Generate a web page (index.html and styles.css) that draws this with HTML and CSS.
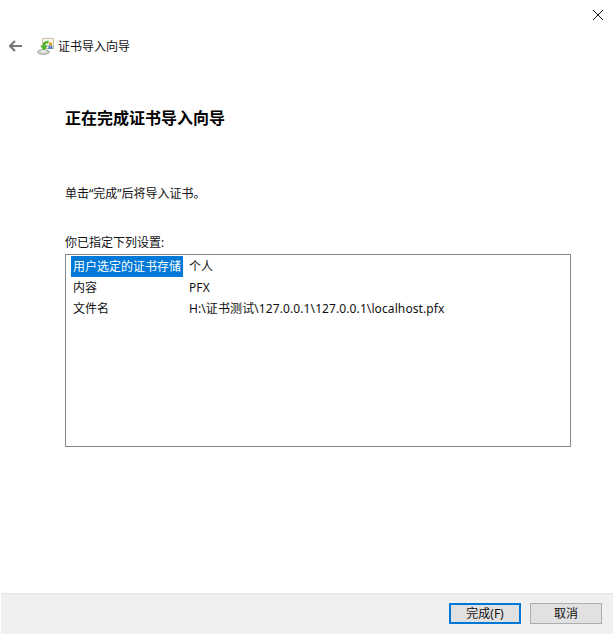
FILE: index.html
```html
<!DOCTYPE html>
<html lang="zh-CN">

<head>
    <meta charset="UTF-8">
    <title>证书导入向导</title>
    <link rel="stylesheet" href="styles.css">
</head>

<body>
    <div class="window">
        <div class="close-row">
            <svg class="close-icon" width="10" height="10" viewBox="0 0 10 10">
                <path d="M0 0L10 10M10 0L0 10" stroke="#111" stroke-width="1" fill="none" />
            </svg>
        </div>
        <div class="nav-row">
            <svg class="back-icon" width="13" height="12" viewBox="0 0 13 12">
                <path d="M6 1L1 6L6 11M1 6H13" stroke="#767676" stroke-width="2" fill="none" />
            </svg>
            <svg class="wizard-icon" width="17" height="17" viewBox="0 0 17 17">
                <rect x="5.5" y="0.5" width="11" height="10" fill="#faf7ee" stroke="#cbbfa8" />
                <rect x="12" y="4.5" width="3" height="3" fill="#e8a020" />
                <rect x="11.5" y="7.5" width="1.7" height="3.5" fill="#3a6fc4" />
                <rect x="13.6" y="7.5" width="1.7" height="3.5" fill="#3a6fc4" />
                <ellipse cx="6.5" cy="14" rx="6" ry="2.5" fill="#c9ccc8" stroke="#8b908b" stroke-width="0.6" />
                <ellipse cx="6.5" cy="13.4" rx="3" ry="1.1" fill="#f1f2f0" />
                <path d="M11.5 2.5L8 3.5L6 5V7.5H3L7 12.5L11 7.5H8.5V6L11.5 5Z" fill="#4fb32e" />
            </svg>
            <span class="wizard-name">证书导入向导</span>
        </div>
        <div class="content">
            <h1 class="heading">正在完成证书导入向导</h1>
            <p class="intro">单击“完成”后将导入证书。</p>
            <p class="list-label">你已指定下列设置:</p>
            <div class="settings-list">
                <div class="settings-row">
                    <div class="col-name"><span class="selected">用户选定的证书存储</span></div>
                    <div class="col-value">个人</div>
                </div>
                <div class="settings-row">
                    <div class="col-name"><span>内容</span></div>
                    <div class="col-value">PFX</div>
                </div>
                <div class="settings-row">
                    <div class="col-name"><span>文件名</span></div>
                    <div class="col-value">H:\证书测试\127.0.0.1\127.0.0.1\localhost.pfx</div>
                </div>
            </div>
        </div>
        <div class="footer">
            <button class="btn btn-default">完成(F)</button>
            <button class="btn">取消</button>
        </div>
    </div>
</body>

</html>
```

FILE: styles.css
```css
* {
    margin: 0;
    padding: 0;
    box-sizing: border-box;
}

html,
body {
    height: 100%;
    background-color: #fff;
}

body {
    font-family: "Noto Sans", "Noto Sans CJK SC", sans-serif;
    font-size: 12px;
    color: #111;
}

.window {
    display: flex;
    flex-direction: column;
    height: 635px;
    padding: 0 1px 1px;
}

.close-row {
    display: flex;
    justify-content: flex-end;
    height: 36px;
    padding: 10px 10px 0 0;
}

.nav-row {
    display: flex;
    align-items: center;
    height: 20px;
    padding-left: 8px;
}

.back-icon {
    margin-right: 15px;
}

.wizard-icon {
    margin-right: 4px;
}

.wizard-name {
    line-height: 20px;
    padding-top: 2px;
}

.content {
    flex: 1;
    padding: 50px 42px 0 64px;
}

.heading {
    font-size: 16px;
    font-weight: 700;
    line-height: 24px;
    color: #000;
}

.intro {
    margin-top: 55px;
    line-height: 18px;
}

.list-label {
    margin-top: 31px;
    line-height: 18px;
}

.settings-list {
    height: 193px;
    margin-top: 2px;
    padding: 1px 5px;
    border: 1px solid #828790;
}

.settings-row {
    display: flex;
    height: 21px;
    line-height: 22px;
}

.col-name {
    width: 118px;
    flex-shrink: 0;
}

.col-name span {
    display: inline-block;
    height: 21px;
    padding: 0 2px;
}

.col-name .selected {
    background-color: #0078d7;
    color: #fff;
}

.col-value {
    letter-spacing: 0.1px;
}

.footer {
    display: flex;
    justify-content: flex-end;
    gap: 9px;
    height: 41px;
    padding: 9px 11px 0 0;
    background-color: #f0f0f0;
    border-top: 1px solid #e4e4e4;
}

.btn {
    width: 72px;
    height: 21px;
    font-family: inherit;
    font-size: 12px;
    line-height: 15px;
    color: #111;
    background-color: #e1e1e1;
    border: 1px solid #adadad;
}

.btn-default {
    border: 2px solid #0078d7;
}
```
